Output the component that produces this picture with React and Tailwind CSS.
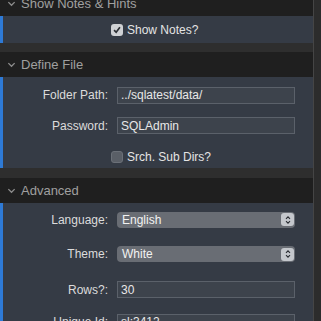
const Chevron = () => (
  <svg viewBox="0 0 10 10" className="h-[9px] w-[9px]" fill="none" stroke="#8e8e8e" strokeWidth="1.4">
    <path d="M1.5 3.5 5 7l3.5-3.5" />
  </svg>
)

const Stepper = () => (
  <span className="flex h-[13px] w-[13px] items-center justify-center rounded-[3px] bg-[#c4c7cc]">
    <svg viewBox="0 0 10 12" className="h-[10px] w-[8px]" fill="none" stroke="#2a2d33" strokeWidth="1.4">
      <path d="M2.5 4.5 5 2l2.5 2.5M2.5 7.5 5 10l2.5-2.5" />
    </svg>
  </span>
)

const Check = ({ checked }) =>
  checked ? (
    <span className="flex h-[12px] w-[12px] items-center justify-center rounded-[3px] bg-[#cfd1d4]">
      <svg viewBox="0 0 12 12" className="h-[10px] w-[10px]" fill="none" stroke="#2b2e33" strokeWidth="2">
        <path d="M2.5 6.2 5 8.8l4.5-6" />
      </svg>
    </span>
  ) : (
    <span className="h-[12px] w-[12px] rounded-[3px] border border-[#6b7078] bg-[#5a5f67]" />
  )

const Header = ({ title, className = '' }) => (
  <div className={`flex h-[25px] shrink-0 items-center bg-[#1f1f1f] pl-[7px] ${className}`}>
    <Chevron />
    <span className="ml-[5px] text-[13px] text-[#a0a0a0]">{title}</span>
  </div>
)

const Label = ({ children }) => (
  <span className="w-[105px] shrink-0 text-right text-[12px] text-[#dcdcdc]">{children}</span>
)

const Field = ({ label, value, h = 'h-[30px]' }) => (
  <div className={`flex shrink-0 items-center ${h}`}>
    <Label>{label}</Label>
    <div className="ml-[9px] flex h-[17px] w-[178px] items-center border border-[#5b616a] bg-[#3d434c] px-[3px] text-[12px] text-[#e8e8e8]">
      {value}
    </div>
  </div>
)

const Select = ({ label, value, h = 'h-[35px]' }) => (
  <div className={`flex shrink-0 items-center ${h}`}>
    <Label>{label}</Label>
    <div className="ml-[9px] flex h-[16px] w-[178px] items-center justify-between rounded-[4px] bg-[#696d74] pl-[5px] pr-[1px] text-[12px] text-[#f2f2f2]">
      <span>{value}</span>
      <Stepper />
    </div>
  </div>
)

const Panel = ({ children, className = '' }) => (
  <div className={`flex shrink-0 border-l-[3px] border-[#2e7ad6] bg-[#353b45] ${className}`}>
    <div className="flex flex-1 flex-col">{children}</div>
  </div>
)

export default function App() {
  return (
    <div className="flex h-[321px] w-[321px] overflow-hidden bg-[#2b2b2b] font-['Liberation_Sans',Arial,sans-serif]">
      <div className="flex w-[313px] shrink-0 flex-col">
        <Header title="Show Notes & Hints" className="-mt-[9px]" />
        <Panel className="h-[27px]">
          <div className="flex h-[27px] items-center pl-[108px]">
            <Check checked />
            <span className="ml-[4px] text-[12px] text-[#e4e4e4]">Show Notes?</span>
          </div>
        </Panel>
        <div className="h-[9px] shrink-0 bg-[#2e2e2e]" />

        <Header title="Define File" />
        <Panel className="h-[91px]">
          <div className="h-[3px] shrink-0" />
          <Field label="Folder Path:" value="../sqlatest/data/" />
          <Field label="Password:" value="SQLAdmin" h="h-[31px]" />
          <div className="flex h-[31px] shrink-0 items-center pl-[108px]">
            <Check />
            <span className="ml-[4px] text-[12px] text-[#e4e4e4]">Srch. Sub Dirs?</span>
          </div>
        </Panel>
        <div className="h-[10px] shrink-0 bg-[#2e2e2e]" />

        <Header title="Advanced" />
        <Panel className="h-[160px]">
          <Select label="Language:" value="English" h="h-[33px]" />
          <Select label="Theme:" value="White" h="h-[36px]" />
          <Field label="Rows?:" value="30" h="h-[35px]" />
          <Field label="Unique Id:" value="sl:3412" h="h-[30px]" />
        </Panel>
      </div>
      <div className="w-[8px] shrink-0 border-l border-[#454545] bg-[#2c2c2c]" />
    </div>
  )
}
